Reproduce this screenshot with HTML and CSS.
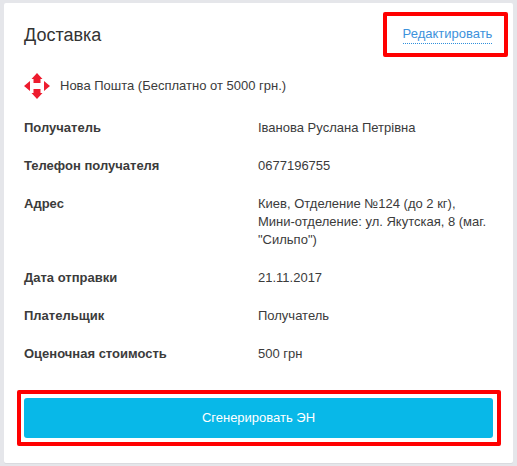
FILE: index.html
```
<!DOCTYPE html>
<html lang="ru">
<head>
<meta charset="utf-8">
<title>Доставка</title>
<link rel="stylesheet" href="styles.css">
</head>
<body>
<section class="card">
  <header class="head">
    <h2 class="title">Доставка</h2>
    <div class="edit-mark"><a class="edit" href="#">Редактировать</a></div>
  </header>
  <div class="carrier">
    <svg class="logo" width="28" height="28" viewBox="0 0 28 28" aria-hidden="true">
      <path fill="#ed1c2e" d="M14 1 19.500 7H17.500V11H10.500V7H8.500ZM14 27 8.500 21H10.500V17H17.500V21H19.500ZM1 14 7 9V19ZM27 14 21 9V19Z"/>
    </svg>
    <span>Нова Пошта (Бесплатно от 5000 грн.)</span>
  </div>
  <dl class="rows">
    <div class="row"><dt>Получатель</dt><dd>Іванова Руслана Петрівна</dd></div>
    <div class="row"><dt>Телефон получателя</dt><dd>0677196755</dd></div>
    <div class="row"><dt>Адрес</dt><dd>Киев, Отделение №124 (до 2 кг), Мини-отделение: ул. Якутская, 8 (маг. "Сильпо")</dd></div>
    <div class="row"><dt>Дата отправки</dt><dd>21.11.2017</dd></div>
    <div class="row"><dt>Плательщик</dt><dd>Получатель</dd></div>
    <div class="row"><dt>Оценочная стоимость</dt><dd>500 грн</dd></div>
  </dl>
  <div class="action-mark"><button class="generate" type="button">Сгенерировать ЭН</button></div>
</section>
</body>
</html>
```
FILE: styles.css
```
* { box-sizing: border-box; }
html, body { height: 100%; }
body {
  margin: 0;
  padding: 3px 4px;
  background: #e5e6ea;
  font-family: "Liberation Sans", Arial, sans-serif;
  font-size: 13px;
  line-height: 18px;
  color: #3b3b3b;
  overflow: hidden;
}
.card {
  width: 509px;
  height: 460px;
  background: #fff;
  border-radius: 2px;
  box-shadow: 0 1px 0 #dadbdf;
  padding: 9px 5px 17px 13px;
  display: flex;
  flex-direction: column;
}
.head {
  height: 45px;
  display: flex;
  justify-content: space-between;
  align-items: center;
}
.title {
  margin: 0 0 0 7px;
  font-size: 18px;
  font-weight: 400;
  color: #333;
}
.edit-mark {
  width: 125px;
  height: 45px;
  border: 4px solid #f00;
  border-radius: 2px;
  display: flex;
  align-items: center;
  justify-content: center;
}
.edit {
  margin-left: 4px;
  color: #3d92dc;
  text-decoration: none;
  border-bottom: 1px dotted #2f8fdc;
  line-height: 16px;
  padding-bottom: 1px;
}
.carrier {
  margin: 15px 0 0 6px;
  height: 28px;
  display: flex;
  align-items: center;
  gap: 9px;
}
.logo { flex: none; }
.rows {
  margin: 19px 0 0 7px;
}
.row {
  display: flex;
  padding-bottom: 20px;
}
dt {
  width: 234px;
  flex: none;
  font-weight: 700;
}
dd {
  margin: 0;
  width: 235px;
}
.action-mark {
  margin-top: auto;
  width: 484px;
  height: 56px;
  border: 4px solid #f00;
  border-radius: 2px;
  padding: 4px 4px 4px 3px;
}
.generate {
  display: block;
  width: 100%;
  height: 100%;
  border: 0;
  border-radius: 3px;
  background: #08b8e8;
  color: #fff;
  font: inherit;
}
```
